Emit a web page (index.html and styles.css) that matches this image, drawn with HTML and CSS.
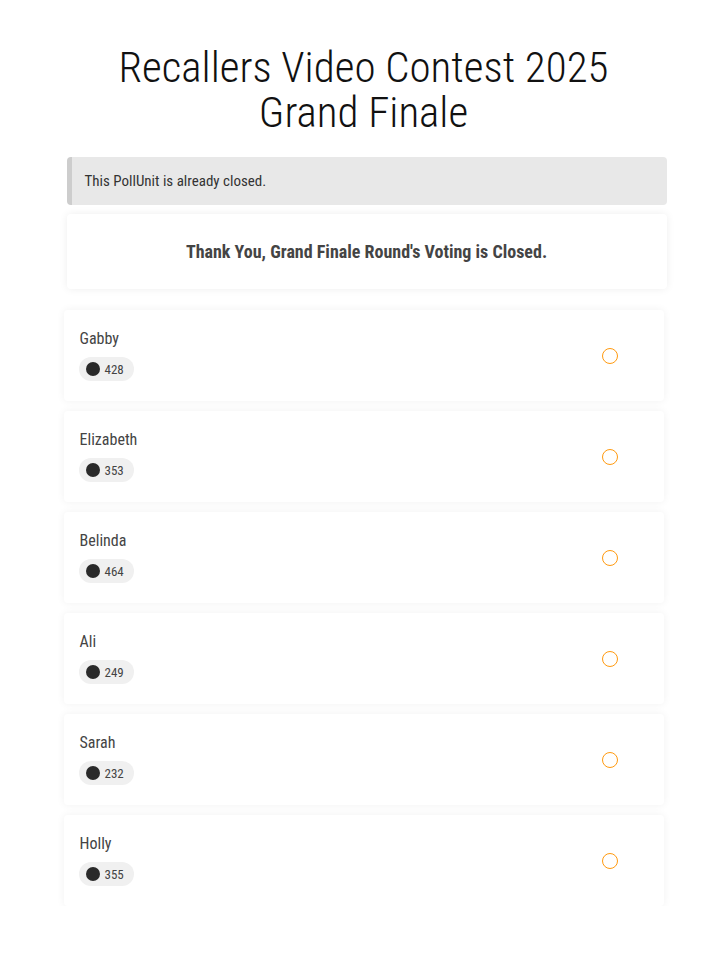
FILE: index.html
```html
<!DOCTYPE html>
<html lang="en">
<head>
<meta charset="utf-8">
<title>Recallers Video Contest 2025 Grand Finale</title>
<link rel="stylesheet" href="styles.css">
</head>
<body>
<div class="poll">
  <h1 class="poll-title">Recallers Video Contest 2025<br>Grand Finale</h1>
  <div class="alert">This PollUnit is already closed.</div>
  <div class="closed-card">Thank You, Grand Finale Round's Voting is Closed.</div>
  <ul class="options">
    <li class="option">
      <div class="option-info">
        <div class="option-name">Gabby</div>
        <span class="votes"><span class="dot"></span>428</span>
      </div>
      <span class="radio"></span>
    </li>
    <li class="option">
      <div class="option-info">
        <div class="option-name">Elizabeth</div>
        <span class="votes"><span class="dot"></span>353</span>
      </div>
      <span class="radio"></span>
    </li>
    <li class="option">
      <div class="option-info">
        <div class="option-name">Belinda</div>
        <span class="votes"><span class="dot"></span>464</span>
      </div>
      <span class="radio"></span>
    </li>
    <li class="option">
      <div class="option-info">
        <div class="option-name">Ali</div>
        <span class="votes"><span class="dot"></span>249</span>
      </div>
      <span class="radio"></span>
    </li>
    <li class="option">
      <div class="option-info">
        <div class="option-name">Sarah</div>
        <span class="votes"><span class="dot"></span>232</span>
      </div>
      <span class="radio"></span>
    </li>
    <li class="option">
      <div class="option-info">
        <div class="option-name">Holly</div>
        <span class="votes"><span class="dot"></span>355</span>
      </div>
      <span class="radio"></span>
    </li>
  </ul>
</div>
</body>
</html>
```
FILE: styles.css
```css
body {
	margin: 0;
	background: #fff;
	color: #444;
	font-family: "Roboto Condensed", Roboto, sans-serif;
}
.poll {
	width: 600px;
	margin: 0 auto;
	padding-top: 45px;
}
.poll-title {
	margin: 0 0 22px;
	font-size: 43px;
	font-weight: 300;
	line-height: 45px;
	text-align: center;
	color: #111;
}
.alert {
	margin: 0 -3px 0 3px;
	padding: 15px 13px;
	line-height: 18px;
	font-size: 15px;
	color: #333;
	background: #e8e8e8;
	border-left: 5px solid #cdcdcd;
	border-radius: 4px;
}
.closed-card {
	margin: 9px -3px 0 3px;
	height: 75px;
	display: flex;
	align-items: center;
	justify-content: center;
	font-size: 18px;
	font-weight: 700;
	color: #444;
	background: #fff;
	border-radius: 4px;
	box-shadow: 0 0 8px rgba(0, 0, 0, 0.07);
}
.options {
	list-style: none;
	margin: 21px 0 0;
	padding: 0;
	display: flex;
	flex-direction: column;
	gap: 10px;
}
.option {
	display: flex;
	align-items: center;
	justify-content: space-between;
	padding: 20px 46px 20px 15px;
	background: #fff;
	border-radius: 4px;
	box-shadow: 0 0 8px rgba(0, 0, 0, 0.06);
}
.option-info {
	display: flex;
	flex-direction: column;
	align-items: flex-start;
	gap: 9px;
}
.option-name {
	padding-left: 1px;
	font-size: 16px;
	line-height: 18px;
	color: #444;
}
.votes {
	display: inline-flex;
	align-items: center;
	gap: 5px;
	height: 24px;
	padding: 0 10px 0 7px;
	font-size: 13px;
	color: #444;
	background: #f0f0f0;
	border-radius: 12px;
}
.dot {
	width: 14px;
	height: 14px;
	border-radius: 50%;
	background: #2a2a2a;
}
.radio {
	width: 16px;
	height: 16px;
	box-sizing: border-box;
	border: 1.5px solid #ff9a0f;
	border-radius: 50%;
}
```
